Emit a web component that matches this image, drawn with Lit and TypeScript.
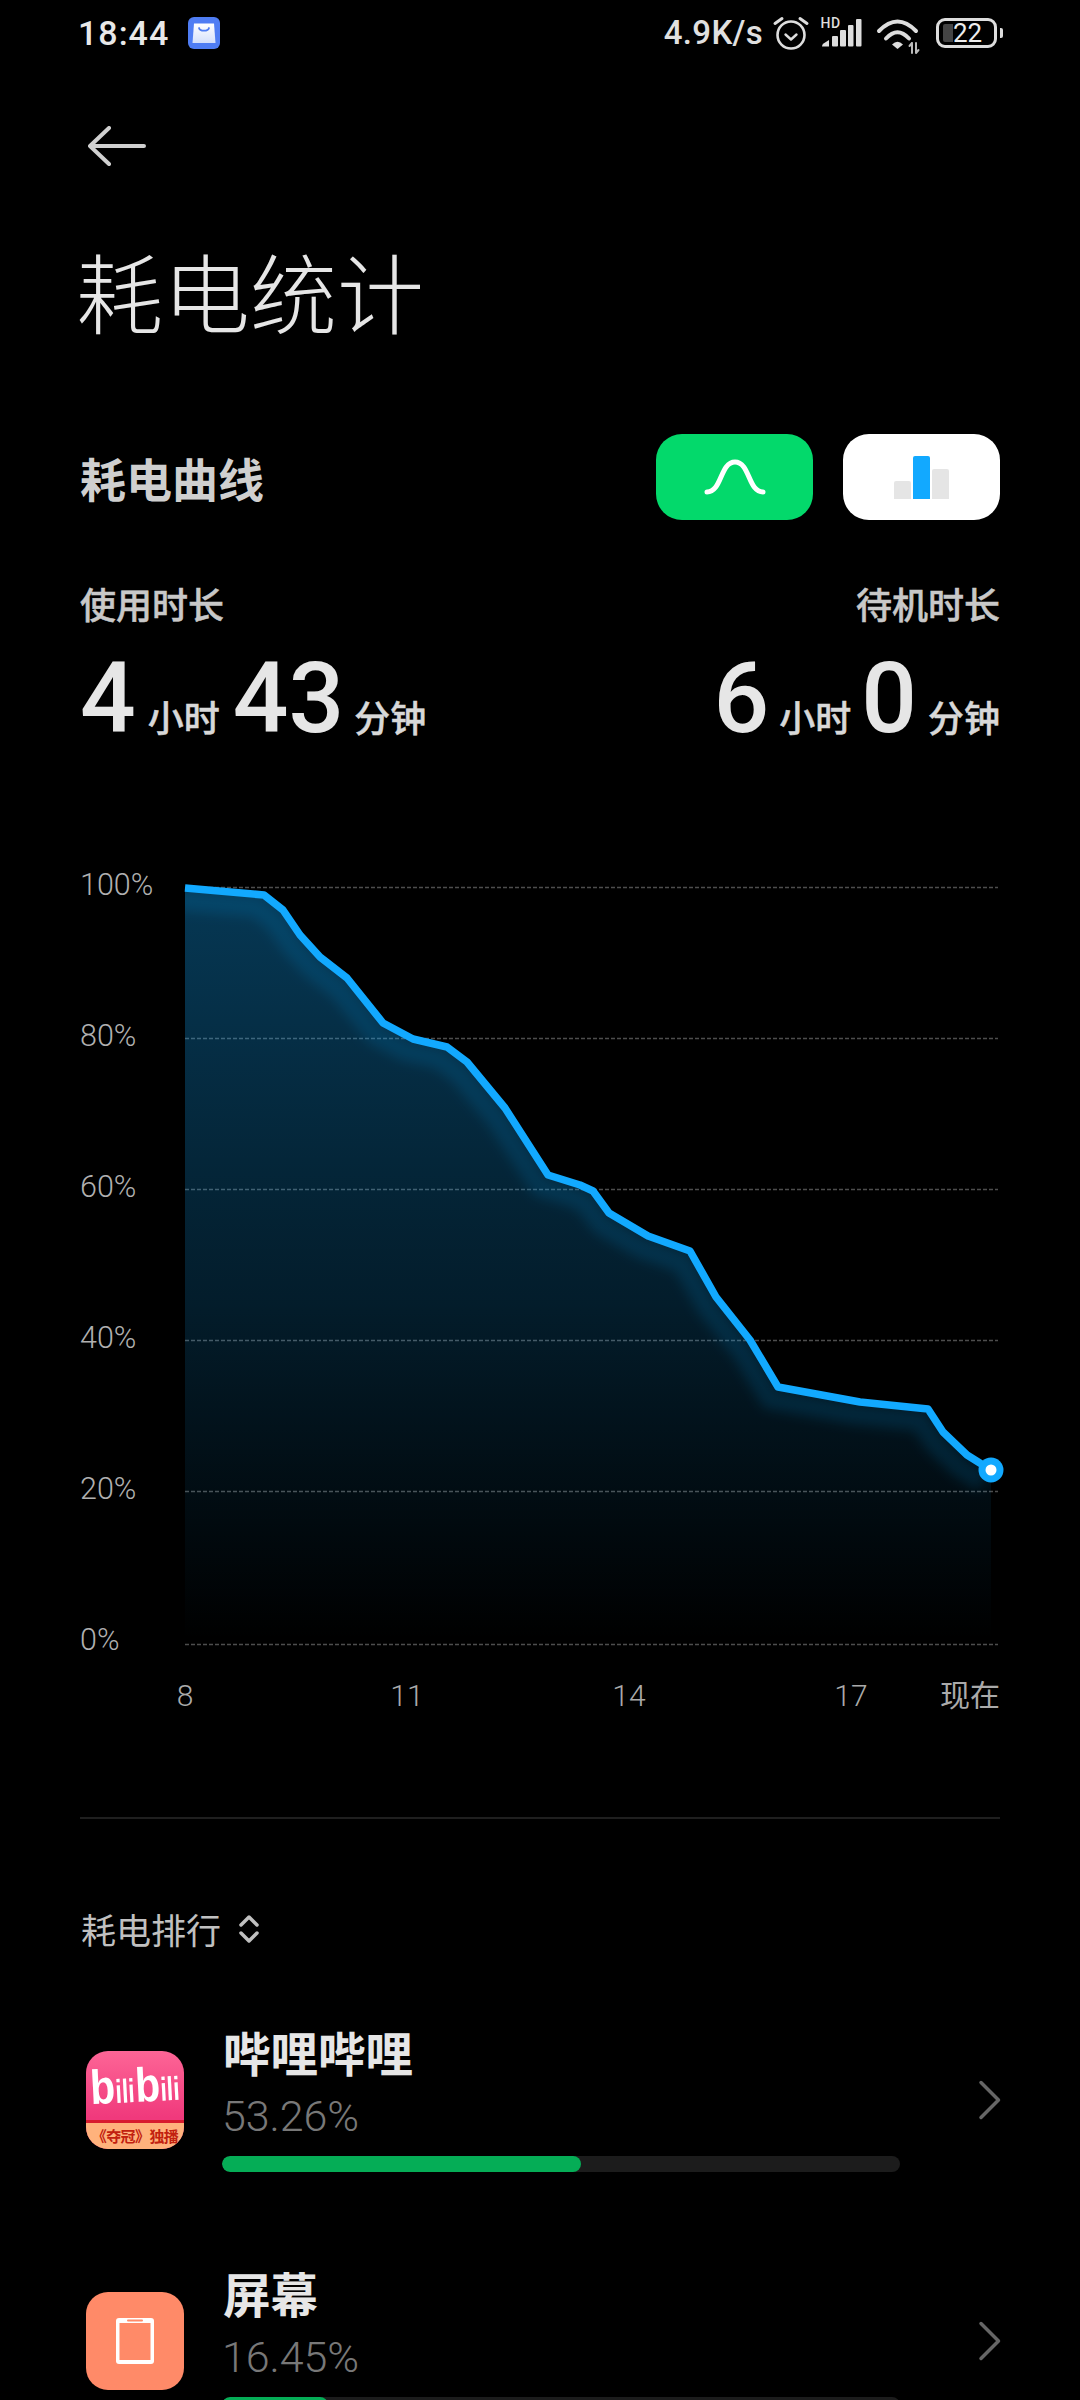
import { LitElement, html, css, svg } from "lit";
import { customElement } from "lit/decorators.js";

const CJK = css`"Noto Sans CJK SC"`;
const pts: [number, number][] = [
  [185, 888], [264, 895], [283, 910], [300, 935], [320, 957], [347, 978], [383, 1023], [413, 1039],
  [447, 1047], [467, 1062], [505, 1108], [548, 1175], [580, 1185], [593, 1191], [609, 1213], [648, 1236],
  [690, 1251], [716, 1297], [750, 1340], [778, 1387], [860, 1402], [928, 1409], [943, 1432], [967, 1455], [991, 1470],
];
const line = pts.map((p) => p.join(",")).join(" ");
const area = `${line} 991,1644 185,1644`;
const grid = [887.5, 1038.5, 1189.5, 1340.5, 1491.5, 1644.5];
const yLabels = ["100%", "80%", "60%", "40%", "20%", "0%"];
const xTicks = ["8", "11", "14", "17"];

const chevron = html`<svg class="chev" width="24" height="40" viewBox="0 0 24 40"><path d="M3 2.500 L20.500 20 L3 37.500" fill="none" stroke="#666" stroke-width="3.500" stroke-linecap="round" stroke-linejoin="round"/></svg>`;

@customElement("app-root")
export class AppRoot extends LitElement {
  static styles = css`
    :host { display: block; width: 1080px; height: 2400px; overflow: hidden; background: #000; color: #e6e6e6;
      font-family: Roboto, ${CJK}, sans-serif; }
    * { box-sizing: border-box; }
    .status { display: flex; align-items: center; height: 70px; padding: 0 77px 4px 78px; }
    .time { font-size: 34px; font-weight: 500; letter-spacing: 1px; color: #e8e8e8; line-height: 60px; }
    .notif { margin-left: 19px; display: block; }
    .speed { margin-left: auto; font-size: 33px; font-weight: 500; color: #e0e0e0; letter-spacing: .3px; line-height: 60px; }
    .status svg { display: block; flex: none; overflow: visible; }
    .ic-alarm { margin-left: 10px; }
    .ic-sig { margin-left: 11px; }
    .ic-wifi { margin-left: 14px; }
    .batt { margin-left: 16px; width: 67px; height: 34px; display: flex; align-items: center; }
    .batt-box { width: 61px; height: 30px; border: 3px solid #ddd; border-radius: 9px; display: flex; align-items: center; padding-left: 4px; }
    .batt-fill { width: 10px; height: 18px; background: #444; border-radius: 2px 0 0 2px; }
    .batt-num { font-size: 26px; font-weight: 400; line-height: 24px; color: #eee; }
    .batt-nib { width: 3px; height: 10px; background: #ddd; border-radius: 0 2px 2px 0; margin-left: 3px; }

    .page { padding: 0 80px; }
    .back { display: block; margin: 56px 0 0 8px; }
    h1 { margin: 74px 0 0 -4px; font: 200 87px/100px ${CJK}, sans-serif; color: #e6e6e6; }
    .head { display: flex; align-items: center; margin-top: 94px; }
    .head h2 { margin: 0; flex: 1; font: 700 46px/86px ${CJK}, sans-serif; color: #cfcfcf; }
    .tog { width: 157px; height: 86px; border-radius: 26px; display: flex; align-items: center; justify-content: center; }
    .tog.green { background: #03d96b; margin-right: 30px; }
    .tog.white { background: #fff; }
    .tog svg { display: block; }
    .labels { display: flex; justify-content: space-between; margin-top: 58px; font: 500 36px/50px ${CJK}, sans-serif; color: #c8c8c8; -webkit-text-stroke: .5px #c8c8c8; }
    .nums { display: flex; justify-content: space-between; margin-top: 21px; }
    .num { display: flex; align-items: baseline; height: 100px; }
    .num b { font: 500 98px/100px Roboto, sans-serif; color: #e6e6e6; }
    .num span { font: 500 36px/40px ${CJK}, sans-serif; color: #d8d8d8; -webkit-text-stroke: .5px #d8d8d8; margin: 0 13px 0 12px; }
    .num span:last-child { margin: 0 0 0 10px; }
    .num.right span { margin: 0 10px; }
    .num.right span:last-child { margin: 0 0 0 11px; }

    .chart { display: flex; margin-top: 116px; height: 795px; }
    .ylab { width: 105px; flex: none; display: flex; flex-direction: column; gap: 111px; }
    .ylab div { height: 40px; font: 300 30.500px/40px Roboto, sans-serif; color: #b0b0b0; }
    .plot { display: block; overflow: visible; flex: none; }
    .xlab { display: flex; gap: 122px; margin-top: 16px; padding-left: 55px; font: 300 30px/40px Roboto, ${CJK}, sans-serif; color: #aaa; }
    .xlab div { width: 100px; text-align: center; }
    .xlab div.now { width: auto; margin-left: -83px; font-weight: 400; }
    .rule { height: 2px; background: #1f1f1f; margin-top: 101px; }
    .rank { display: flex; align-items: center; gap: 17px; margin-top: 85px; padding-left: 1px; font: 400 35px/50px ${CJK}, sans-serif; color: #c0c0c0; }
    .rank svg { display: block; }
    .list { margin-top: 68px; display: flex; flex-direction: column; gap: 91px; }
    .row { display: flex; align-items: flex-start; }
    .icon { width: 98px; height: 98px; border-radius: 22px; margin: 29px 38px 0 6px; flex: none; overflow: hidden; display: flex; flex-direction: column; }
    .icon.bili { background: linear-gradient(#fd6596, #f0397c 68%); }
    .bili-t { height: 69px; flex: none; padding-top: 2px; color: #fff; font: 700 48px/66px "Liberation Sans", sans-serif; display: flex; align-items: baseline; justify-content: center; transform: rotate(-3deg); }
    .bili-t u { display: inline-block; text-decoration: none; transform: scaleX(.85); margin: 0 -2px; }
    .bili-t i { display: inline-block; font-style: normal; font-size: 33px; transform: scaleX(.7); margin: 0 -4px; }
    .bili-b { flex: 1; background: #ffb27c; border-top: 3px solid #d81b2e; color: #c2200f; font: 700 15px/25px ${CJK}, serif; display: flex; justify-content: center; white-space: nowrap; letter-spacing: -.6px; }
    .icon.screen { background: #ff8a68; align-items: center; justify-content: center; }
    .icon.screen svg { display: block; }
    .info { width: 678px; flex: none; }
    .name { font: 700 47.500px/60px ${CJK}, sans-serif; color: #e6e6e6; padding-left: 1px; }
    .pct { font: 300 43px/50px Roboto, sans-serif; color: #787878; margin-top: 9px; letter-spacing: -.1px; }
    .track { height: 16px; border-radius: 8px; background: #1c1c1c; margin-top: 15px; overflow: hidden; }
    .fill { height: 100%; border-radius: 8px; background: #05ad56; }
    .chev { display: block; flex: none; margin: 58px 0 0 78px; }
  `;

  private statusBar() {
    return html`<div class="status">
      <span class="time">18:44</span>
      <svg class="notif" width="32" height="32" viewBox="0 0 32 32">
        <defs><linearGradient id="bag" x1="0" y1="0" x2="0" y2="1"><stop offset="0" stop-color="#fff"/><stop offset="1" stop-color="#d5e0fb"/></linearGradient></defs>
        <rect width="32" height="32" rx="6" fill="#4f7df3"/>
        <path d="M6 6.500h20l1.500 19.500H4.500z" fill="url(#bag)"/>
        <path d="M11 11c1 3.600 9 3.600 10 0" fill="none" stroke="#4f7df3" stroke-width="1.800" stroke-linecap="round"/>
      </svg>
      <span class="speed">4.9K/s</span>
      <svg class="ic-alarm" width="36" height="36" viewBox="0 0 36 36" fill="none" stroke="#ddd">
        <circle cx="18" cy="20" r="13.500" stroke-width="2.600"/>
        <path d="M12.500 19.500l5.500 5 5.500-5" stroke-width="2.400" stroke-linecap="round" stroke-linejoin="round"/>
        <path d="M2 8.500L9 3.500M34 8.500L27 3.500" stroke-width="3" stroke-linecap="round"/>
      </svg>
      <svg class="ic-sig" width="42" height="32" viewBox="0 0 42 32" fill="#ddd">
        <text x="0.500" y="11" font-family="Roboto, sans-serif" font-weight="500" font-size="14" letter-spacing=".5">HD</text>
        <path d="M2 29.500Q2 27.500 3.500 26.500L9 23v6.500z"/>
        <rect x="12" y="19" width="6" height="10.500" rx="1"/>
        <rect x="20" y="13" width="6" height="16.500" rx="1"/>
        <rect x="28" y="8" width="5.500" height="21.500" rx="1"/>
        <rect x="36" y="2" width="5.500" height="27.500" rx="1"/>
      </svg>
      <svg class="ic-wifi" width="44" height="32" viewBox="0 0 44 32" fill="none" stroke="#ddd" stroke-linecap="round">
        <path d="M3 14Q21.500 -5 40 14" stroke-width="4"/>
        <path d="M10 21.500Q21.500 9 33 21.500" stroke-width="4"/>
        <path d="M16 27.500Q21.500 22 27 27.500L21.500 32z" fill="#ddd" stroke="none"/>
        <path d="M36 26v10M36 26l-2.500 3M40 36v-10M40 36l2.500-3" stroke="#bbb" stroke-width="2"/>
      </svg>
      <div class="batt">
        <div class="batt-box"><div class="batt-fill"></div><span class="batt-num">22</span></div>
        <div class="batt-nib"></div>
      </div>
    </div>`;
  }

  private plot() {
    return html`<svg class="plot" width="815" height="795" viewBox="185 865 815 795">
      <defs>
        <linearGradient id="ar" gradientUnits="userSpaceOnUse" x1="0" y1="888" x2="0" y2="1640">
          <stop offset="0" stop-color="#12a9ff" stop-opacity=".33"/>
          <stop offset=".55" stop-color="#12a9ff" stop-opacity=".17"/>
          <stop offset="1" stop-color="#12a9ff" stop-opacity="0"/>
        </linearGradient>
        <clipPath id="cp"><polygon points="${area}"/></clipPath>
        <filter id="bl" x="-10%" y="-10%" width="120%" height="120%"><feGaussianBlur stdDeviation="6"/></filter>
      </defs>
      ${grid.map((y) => svg`<line x1="185" x2="998" y1="${y}" y2="${y}" stroke="#fff" stroke-opacity=".3" stroke-width="1.500" stroke-dasharray="4 2"/>`)}
      <polygon points="${area}" fill="url(#ar)"/>
      <g clip-path="url(#cp)"><polyline points="${line}" transform="translate(-8 12)" fill="none" stroke="#12a9ff" stroke-opacity=".13" stroke-width="20" filter="url(#bl)"/></g>
      <polyline points="${line}" fill="none" stroke="#12a9ff" stroke-width="7.500" stroke-linejoin="round"/>
      <circle cx="991" cy="1470" r="12.500" fill="#12a9ff"/>
      <circle cx="991" cy="1470" r="5.500" fill="#fff"/>
    </svg>`;
  }

  render() {
    return html`
      ${this.statusBar()}
      <div class="page">
        <svg class="back" width="60" height="40" viewBox="0 0 60 40" fill="none" stroke="#d0d0d0" stroke-width="4" stroke-linecap="round" stroke-linejoin="round">
          <path d="M21 2L2 20l19 18M2 20h54"/>
        </svg>
        <h1>耗电统计</h1>
        <div class="head">
          <h2>耗电曲线</h2>
          <div class="tog green">
            <svg width="62" height="36" viewBox="0 0 62 36"><path d="M3 33c15 0 13-30 28-30s13 30 28 30" fill="none" stroke="#fff" stroke-width="5" stroke-linecap="round"/></svg>
          </div>
          <div class="tog white">
            <svg width="55" height="43" viewBox="0 0 55 43">
              <path d="M0 43V27a2 2 0 0 1 2-2h13a2 2 0 0 1 2 2v16z" fill="#e5e5e5"/>
              <path d="M19 43V2a2 2 0 0 1 2-2h13a2 2 0 0 1 2 2v41z" fill="#12a9ff"/>
              <path d="M38 43V15a2 2 0 0 1 2-2h13a2 2 0 0 1 2 2v28z" fill="#e5e5e5"/>
            </svg>
          </div>
        </div>
        <div class="labels"><span>使用时长</span><span>待机时长</span></div>
        <div class="nums">
          <div class="num"><b>4</b><span>小时</span><b>43</b><span>分钟</span></div>
          <div class="num right"><b>6</b><span>小时</span><b>0</b><span>分钟</span></div>
        </div>
        <div class="chart">
          <div class="ylab">${yLabels.map((l) => html`<div>${l}</div>`)}</div>
          ${this.plot()}
        </div>
        <div class="xlab">${xTicks.map((t) => html`<div>${t}</div>`)}<div class="now">现在</div></div>
        <div class="rule"></div>
        <div class="rank">耗电排行
          <svg width="22" height="30" viewBox="0 0 22 30" fill="none" stroke="#c0c0c0" stroke-width="3.500" stroke-linecap="round" stroke-linejoin="round"><path d="M3 11l8-8 8 8M3 19l8 8 8-8"/></svg>
        </div>
        <div class="list">
          <div class="row">
            <div class="icon bili">
              <div class="bili-t"><u>b</u><i>ili</i><u>b</u><i>ili</i></div>
              <div class="bili-b">《夺冠》独播</div>
            </div>
            <div class="info">
              <div class="name">哔哩哔哩</div>
              <div class="pct">53.26%</div>
              <div class="track"><div class="fill" style="width:53%"></div></div>
            </div>
            ${chevron}
          </div>
          <div class="row">
            <div class="icon screen">
              <svg width="38" height="46" viewBox="0 0 38 46">
                <rect width="38" height="46" rx="3" fill="#fff"/>
                <rect x="3.500" y="5" width="31" height="37" fill="#ff8a68"/>
                <rect x="11" y="1.500" width="16" height="2" rx="1" fill="#ff8a68"/>
              </svg>
            </div>
            <div class="info">
              <div class="name">屏幕</div>
              <div class="pct">16.45%</div>
              <div class="track"><div class="fill" style="width:15.6%"></div></div>
            </div>
            ${chevron}
          </div>
        </div>
      </div>
    `;
  }
}
